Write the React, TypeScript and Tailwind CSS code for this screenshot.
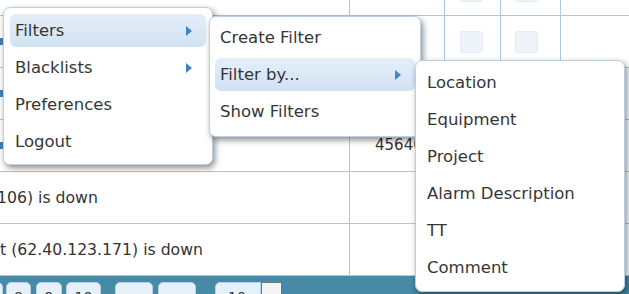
import React from "react";

const line = "border-[#abc9e3]";

function Arrow() {
  return (
    <svg width="6" height="10" viewBox="0 0 6 10" className="shrink-0">
      <path d="M0 0 L6 5 L0 10 Z" fill="#3f86c8" />
    </svg>
  );
}

function Item({ label, active, sub }: { label: string; active?: boolean; sub?: boolean }) {
  return (
    <div
      className={
        "flex items-center justify-between h-[33px] pl-[5px] pr-[14px] pt-[1px] rounded-[6px] " +
        (active ? "bg-gradient-to-b from-[#e4eef9] to-[#d2e2f2]" : "")
      }
    >
      <span>{label}</span>
      {sub && <Arrow />}
    </div>
  );
}

function Menu({ className, items }: { className: string; items: { label: string; active?: boolean; sub?: boolean }[] }) {
  return (
    <div
      className={
        "absolute flex flex-col gap-[4px] bg-white border border-[#bcd0e3] rounded-[7px] text-[16.5px] text-[#363636] shadow-[2px_3px_6px_rgba(0,0,0,0.45)] " +
        className
      }
    >
      {items.map((it) => (
        <Item key={it.label} {...it} />
      ))}
    </div>
  );
}

function Check() {
  return <div className="w-[23px] h-[22px] rounded-[3px] bg-[#eff4fa] border border-[#e2eaf4]" />;
}

function Row({ children, num, checks, mark }: { children?: React.ReactNode; num?: string; checks?: boolean; mark?: boolean }) {
  return (
    <div className={"grid grid-cols-[350px_95px_56px_60px_1fr] h-[52px] border-b " + line}>
      <div className={"relative flex items-center border-r overflow-hidden " + line}>
        {mark && <div className="w-[3px] h-[7px] bg-[#3f7fc0]" />}
        {children}
      </div>
      <div className={"flex items-center pl-[25px] border-r text-[15px] " + line}>{num}</div>
      <div className={"flex items-center justify-center pr-[3px] border-r " + line}>{checks && <Check />}</div>
      <div className={"flex items-center justify-center pr-[8px] border-r " + line}>{checks && <Check />}</div>
      <div />
    </div>
  );
}

function PageBtn({ w, label, className }: { w: string; label?: string; className?: string }) {
  return (
    <div
      className={
        "h-[22px] rounded-[5px] bg-[#e6f0f9] border border-[#b9cfe2] text-center text-[14px] pt-[4px] text-[#333] " +
        w +
        " " +
        (className || "")
      }
    >
      {label}
    </div>
  );
}

export default function App() {
  return (
    <div className="relative w-[629px] h-[294px] overflow-hidden bg-white text-[#333] font-['DejaVu_Sans',sans-serif] text-[15.7px]">
      {/* table behind the menus */}
      <div className="flex flex-col">
        <div className={"grid grid-cols-[350px_95px_56px_60px_1fr] h-[16px] border-b " + line}>
          <div className={"border-r " + line} />
          <div className={"border-r " + line} />
          <div className={"flex justify-center pr-[3px] border-r overflow-hidden " + line}>
            <div className="mt-[-20px]">
              <Check />
            </div>
          </div>
          <div className={"flex justify-center pr-[8px] border-r overflow-hidden " + line}>
            <div className="mt-[-20px]">
              <Check />
            </div>
          </div>
          <div />
        </div>
        <Row checks mark />
        <Row mark />
        <Row mark num="45640" />
        <Row>
          <span className="ml-[-3px] whitespace-nowrap">106) is down</span>
        </Row>
        <Row>
          <span className="whitespace-nowrap">t (62.40.123.171) is down</span>
        </Row>
        {/* pager */}
        <div className="flex items-start h-[18px] pt-[6px] bg-[#468aa5]">
          <PageBtn w="w-[23px]" className="ml-[-20px]" />
          <PageBtn w="w-[25px]" label="8" className="ml-[3px]" />
          <PageBtn w="w-[26px]" label="9" className="ml-[5px]" />
          <PageBtn w="w-[35px]" label="10" className="ml-[4px]" />
          <PageBtn w="w-[38px]" className="ml-[14px]" />
          <PageBtn w="w-[38px]" className="ml-[5px]" />
          <div className="ml-[19px] flex h-[22px]">
            <div className="w-[46px] rounded-l-[5px] bg-[#e6f0f9] border border-[#b9cfe2] text-[14px] pt-[4px] pl-[12px]">10</div>
            <div className="w-[21px] bg-[#f4f4f4] border border-[#777]" />
          </div>
        </div>
      </div>

      <Menu
        className="left-[3px] top-[7px] w-[210px] h-[158px] pt-[6px] px-[6px]"
        items={[
          { label: "Filters", active: true, sub: true },
          { label: "Blacklists", sub: true },
          { label: "Preferences" },
          { label: "Logout" },
        ]}
      />
      <Menu
        className="left-[209px] top-[16px] w-[212px] h-[121px] pt-[4px] px-[5px]"
        items={[
          { label: "Create Filter" },
          { label: "Filter by...", active: true, sub: true },
          { label: "Show Filters" },
        ]}
      />
      <Menu
        className="left-[415px] top-[60px] w-[210px] h-[232px] pt-[5px] px-[6px]"
        items={[
          { label: "Location" },
          { label: "Equipment" },
          { label: "Project" },
          { label: "Alarm Description" },
          { label: "TT" },
          { label: "Comment" },
        ]}
      />
    </div>
  );
}
